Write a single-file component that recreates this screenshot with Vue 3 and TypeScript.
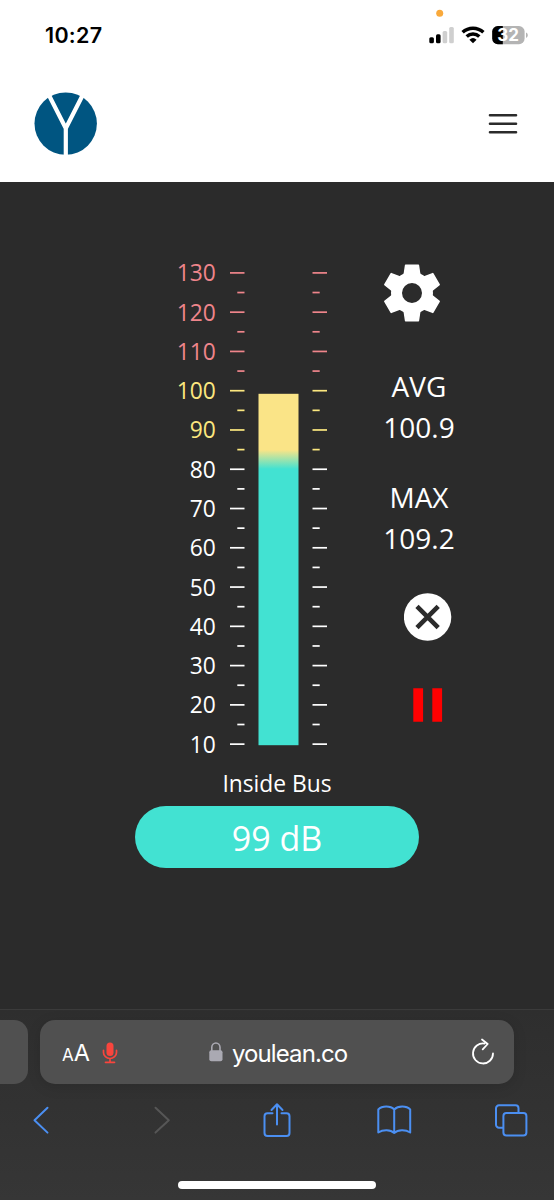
<script setup lang="ts">
interface Tick {
  y: number
  major: boolean
  tone: string
}
interface Stat {
  label: string
  value: string
}

const STEP = 39.27
const levels: number[] = Array.from({ length: 13 }, (_, i) => 130 - i * 10)
const toneOf = (level: number): string => (level > 100 ? 'high' : level > 80 ? 'mid' : 'low')
const labels = levels.map((level, i) => ({ level, y: 23 + i * STEP, tone: toneOf(level) }))
const ticks: Tick[] = Array.from({ length: 25 }, (_, i) => ({
  y: 22.9 + (i * STEP) / 2,
  major: i % 2 === 0,
  tone: toneOf(130 - i * 5),
}))
const stats: Stat[] = [
  { label: 'AVG', value: '100.9' },
  { label: 'MAX', value: '109.2' },
]
</script>

<template>
  <div class="phone">
    <header class="top">
      <div class="status">
        <span class="time">10:27</span>
        <svg class="indicators" width="110" height="54" viewBox="424 0 110 54">
          <circle cx="439.7" cy="13.3" r="3.5" fill="#f9a93b" />
          <rect x="429.3" y="37.3" width="4.6" height="6" rx="1.5" />
          <rect x="436" y="34.3" width="4.6" height="9" rx="1.5" />
          <g fill="#cfcfcf">
            <rect x="442.6" y="31" width="4.6" height="12.3" rx="1.5" />
            <rect x="449.2" y="27" width="4.6" height="16.3" rx="1.5" />
          </g>
          <g fill="none" stroke="#000" stroke-width="3.5">
            <path d="M462.6 32.2a15.4 15.4 0 0 1 20.8 0" />
            <path d="M466.7 36.5a9.3 9.3 0 0 1 12.6 0" />
          </g>
          <path d="M473 43.2l-3.6-3.5a5.4 5.4 0 0 1 7.2 0z" />
          <clipPath id="cell"><rect x="492.2" y="26" width="32.4" height="18.2" rx="5.6" /></clipPath>
          <g clip-path="url(#cell)">
            <rect x="492" y="26" width="33" height="19" fill="#b4b4b4" />
            <rect x="492" y="26" width="10.8" height="19" />
          </g>
          <path d="M526 32.4c2.4 1 2.4 4.4 0 5.4z" fill="#b4b4b4" />
          <text class="percent" x="508" y="41" text-anchor="middle">32</text>
        </svg>
      </div>
      <div class="nav">
        <svg class="logo" width="64" height="64" viewBox="-32 -32 64 64">
          <circle cx="-0.3" cy="-0.4" r="31.2" fill="#005581" />
          <path d="M-17.4-29.5L-0.2 4.3L17-29.5M-0.2 3V32" fill="none" stroke="#fff" stroke-width="4.2" />
        </svg>
        <svg class="burger" width="30" height="22" viewBox="0 0 30 22">
          <path d="M2 2.2H28M2 10.7H28M2 19.3H28" stroke="#2b2b2b" stroke-width="2.6" stroke-linecap="round" />
        </svg>
      </div>
    </header>

    <main class="meter">
      <div class="board">
        <svg class="gauge" width="175" height="510" viewBox="0 0 175 510">
          <defs>
            <linearGradient id="level" gradientUnits="userSpaceOnUse" x1="0" y1="200" x2="0" y2="219">
              <stop offset="0" stop-color="#fae487" />
              <stop offset="1" stop-color="#42e2d2" />
            </linearGradient>
          </defs>
          <text v-for="l in labels" :key="l.level" :class="['mark', l.tone]" x="50.8" :y="l.y + 8.4" text-anchor="end">{{ l.level }}</text>
          <g v-for="t in ticks" :key="t.y" :class="t.tone">
            <rect :x="t.major ? 65 : 72.3" :y="t.y - 0.85" :width="t.major ? 14.5 : 7.2" height="1.7" />
            <rect x="147.5" :y="t.y - 0.85" :width="t.major ? 14.5 : 7.2" height="1.7" />
          </g>
          <rect x="93.5" y="143.8" width="40" height="351.4" fill="url(#level)" />
        </svg>
        <aside class="side">
          <svg class="gear" width="58" height="58" viewBox="-29 -29 58 58">
            <g fill="#fff" stroke="#fff" stroke-width="1.5" stroke-linejoin="round">
              <path
                v-for="a in [0, 60, 120, 180, 240, 300]"
                :key="a"
                d="M-6.4-27.7H6.4L8-17H-8z"
                :transform="`rotate(${a})`"
              />
            </g>
            <circle r="15.5" fill="none" stroke="#fff" stroke-width="11" />
          </svg>
          <dl v-for="s in stats" :key="s.label" class="stat">
            <dt>{{ s.label }}</dt>
            <dd>{{ s.value }}</dd>
          </dl>
          <svg class="reset" width="48" height="48" viewBox="-24 -24 48 48">
            <circle cx="-0.4" r="23.7" fill="#fff" />
            <path d="M-11-10.600L10.200 10.600M10.200-10.600L-11 10.600" stroke="#2b2b2b" stroke-width="4.600" />
          </svg>
          <svg class="pause" width="30" height="34" viewBox="0 0 30 34">
            <path d="M.3.300h9.800v33.400H.3zM19.300.300h9.800v33.400h-9.800z" fill="#f00" />
          </svg>
        </aside>
      </div>
      <div class="place">Inside Bus</div>
      <div class="reading">99 dB</div>
    </main>

    <footer class="browser">
      <div class="tabs">
        <div class="previous"></div>
        <div class="address">
          <span class="aa"><small>A</small>A</span>
          <svg class="mic" width="16" height="22" viewBox="0 0 16 22">
            <rect x="4.5" y=".5" width="7" height="13.5" rx="3.5" fill="#f9453d" />
            <path d="M1.500 8.300v2.200a6.500 6 0 0 0 13 0V8.300M8 16.500v3.600M3.500 20.300h9" fill="none" stroke="#f9453d" stroke-width="1.7" stroke-linecap="round" />
          </svg>
          <svg class="lock" width="14" height="20" viewBox="0 0 14 20">
            <rect x=".3" y="8.3" width="13.2" height="10.9" rx="2" fill="#aaa9b2" />
            <path d="M2.800 9V5.300a4.100 4.300 0 0 1 8.200 0V9" fill="none" stroke="#aaa9b2" stroke-width="1.6" />
          </svg>
          <span class="domain">youlean.co</span>
          <svg class="reload" width="24" height="28" viewBox="0 0 24 28">
            <path d="M13.500 5.600A10 10 0 1 0 22 15.500M11 1.500L16.700 6L11.700 11.300" fill="none" stroke="#fff" stroke-width="1.8" stroke-linecap="round" stroke-linejoin="round" />
          </svg>
        </div>
      </div>
      <nav class="tools">
        <svg viewBox="0 0 36 36"><path d="M24.500 5.800L11.500 18.200L24.500 30.600" /></svg>
        <svg class="off" viewBox="0 0 36 36"><path d="M14.500 5.800L27.800 18.200L14.500 30.600" /></svg>
        <svg viewBox="0 0 36 36">
          <path d="M14.500 11.300H9.500a3 3 0 0 0-3 3V31a3 3 0 0 0 3 3H28.500a3 3 0 0 0 3-3V14.300a3 3 0 0 0-3-3H23.500M19 22.500V2.500M13.500 8L19 2.200L24.500 8" />
        </svg>
        <svg viewBox="0 0 36 36">
          <path d="M18.200 7.500C14.500 3.600 6 3.600 2.300 7.500V30.500C7 27.500 14.500 27.500 18.200 31C22 27.500 29.500 27.500 34.200 30.500V7.500C30.500 3.600 22 3.600 18.200 7.500V31" />
        </svg>
        <svg viewBox="0 0 36 36">
          <rect x="10.4" y="10.9" width="23" height="22.6" rx="3" />
          <path d="M10 25.700H6a3 3 0 0 1-3-3V6.300a3 3 0 0 1 3-3H22.500a3 3 0 0 1 3 3V10.500" />
        </svg>
      </nav>
      <div class="home"></div>
    </footer>
  </div>
</template>

<style>
html,
body {
  margin: 0;
  background: #2b2b2b;
}
</style>

<style scoped>
.phone {
  width: 554px;
  height: 1200px;
  display: flex;
  flex-direction: column;
  overflow: hidden;
  background: #2b2b2b;
  color: #fff;
  font-family: 'Open Sans', 'Noto Sans', sans-serif;
}
svg {
  display: block;
  flex: none;
}
.top {
  height: 182px;
  background: #fff;
}
.status {
  height: 70px;
  display: flex;
  justify-content: space-between;
  align-items: flex-start;
  padding: 0 20px 0 45px;
}
.time {
  color: #000;
  font: 600 21.5px/26px Inter, sans-serif;
  letter-spacing: 0.3px;
  margin-top: 22px;
}
.percent {
  fill: #fff;
  font: 700 17px Inter, sans-serif;
}
.nav {
  display: flex;
  justify-content: space-between;
  padding: 22px 36px 0 34px;
}
.burger {
  margin-top: 21px;
}
.meter {
  flex: 1;
  display: flex;
  flex-direction: column;
  align-items: center;
}
.board {
  align-self: stretch;
  display: flex;
  height: 519px;
  padding: 68px 0 0 165px;
}
.side {
  width: 110px;
  margin-left: 24px;
  display: flex;
  flex-direction: column;
  align-items: center;
  padding-top: 14px;
}
.gear {
  margin: 0 14px 15px 0;
}
.mark {
  font-size: 22.8px;
}
.high {
  fill: #ef858b;
}
.mid {
  fill: #fbe77f;
}
.low {
  fill: #fff;
}
.stat {
  margin: 29px 0 0;
  text-align: center;
  font-size: 28px;
  line-height: 41px;
}
.stat dd {
  margin: 0;
}
.reset {
  margin: 34px 0 0 17px;
}
.pause {
  margin: 47px 0 0 17px;
}
.place {
  font-size: 22.8px;
  line-height: 30px;
}
.reading {
  width: 284px;
  height: 62px;
  margin-top: 7px;
  border-radius: 31px;
  background: #42e2d2;
  text-align: center;
  font-size: 34px;
  line-height: 64px;
}
.browser {
  height: 190px;
  border-top: 1px solid #3b3b3b;
  background: linear-gradient(#2e2e2e, #363636);
  font-family: Inter, sans-serif;
}
.tabs {
  display: flex;
  gap: 12px;
  padding-top: 10px;
}
.previous {
  width: 28px;
  border-radius: 0 14px 14px 0;
  background: #505050;
}
.address {
  width: 474px;
  height: 64px;
  box-sizing: border-box;
  padding: 0 19px 0 22px;
  display: flex;
  align-items: center;
  border-radius: 15px;
  background: #505050;
  box-shadow: 0 3px 14px rgba(0, 0, 0, 0.12);
}
.aa {
  font-size: 23.5px;
  line-height: 30px;
  margin-top: 4px;
}
.aa small {
  font-size: 17px;
}
.mic {
  margin: 1px 0 0 12px;
}
.lock {
  margin-left: 91px;
}
.domain {
  flex: 1;
  margin: 4px 0 0 9px;
  font-size: 24px;
  line-height: 30px;
  letter-spacing: -0.9px;
}
.reload {
  margin-bottom: 1px;
}
.tools {
  display: flex;
  justify-content: space-between;
  padding: 18px 25px 0 23px;
}
.tools svg {
  width: 36px;
  height: 36px;
  fill: none;
  stroke: #4b8ff2;
  stroke-width: 2;
  stroke-linecap: round;
  stroke-linejoin: round;
}
.tools .off {
  stroke: #565656;
}
.home {
  width: 198px;
  height: 8px;
  margin: 43px 0 0 178px;
  border-radius: 4px;
  background: #fff;
}
</style>
